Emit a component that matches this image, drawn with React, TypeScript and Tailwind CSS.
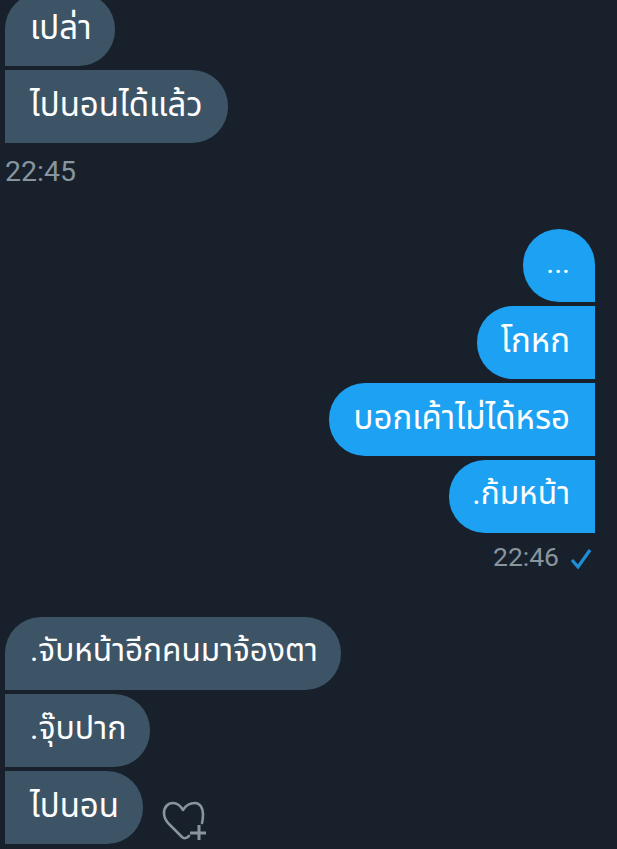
import React from "react";

const sans = "font-['Roboto','Noto_Sans','Noto_Sans_Thai','DejaVu_Sans',sans-serif]";

function Bubble({ text, mine, corners, width, size = "text-[33px]" }: { text: string; mine?: boolean; corners: string; width: string; size?: string }) {
  return (
    <div
      className={`h-[73px] flex items-center pb-[5px] leading-none text-white whitespace-nowrap ${size} ${corners} ${width} ${
        mine ? "bg-[#1da1f2] justify-end pr-[25px]" : "bg-[#3d5466] pl-[25px]"
      }`}
    >
      {text}
    </div>
  );
}

function HeartPlus() {
  return (
    <svg width="44" height="42" viewBox="0 0 44 42" fill="none" className="mb-[3px] ml-[19px] text-[#88959f]">
      <path
        d="M27 37 C25 39 22 40 20 38 L7 25 C3 21 2 17 2 14 C2 8 6 4 11 4 C15 4 18 6 21 11 C24 6 28 4 33 4 C38 4 41 9 41 15 C41 18 41 21 40 24"
        stroke="currentColor"
        strokeWidth="2.6"
        strokeLinecap="round"
        strokeLinejoin="round"
      />
      <path d="M37 26 V41 M28 34 H44" stroke="currentColor" strokeWidth="3" />
    </svg>
  );
}

export default function App() {
  return (
    <div className={`h-[849px] overflow-hidden bg-[#18212b] ${sans}`}>
      <div className="-mt-[7px] flex flex-col pl-[5px] pr-[22px]">
        {/* Incoming, first group */}
        <div className="flex flex-col items-start gap-1">
          <Bubble text="เปล่า" corners="rounded-tl-[36px] rounded-r-[36px]" width="w-[110px]" />
          <Bubble text="ไปนอนได้แล้ว" corners="rounded-r-[36px]" width="w-[223px]" />
        </div>
        <div className="mt-[14px] text-[28.5px] leading-[30px] text-[#88959f]">22:45</div>

        {/* Outgoing */}
        <div className="mt-[42px] flex flex-col items-end gap-1">
          <Bubble text="..." mine size="text-[30px]" corners="rounded-tr-[36px] rounded-l-[36px]" width="w-[72px]" />
          <Bubble text="โกหก" mine corners="rounded-l-[36px]" width="w-[118px]" />
          <Bubble text="บอกเค้าไม่ได้หรอ" mine corners="rounded-l-[36px]" width="w-[266px]" />
          <Bubble text=".ก้มหน้า" mine size="text-[31.7px]" corners="rounded-l-[36px]" width="w-[146px]" />
        </div>
        <div className="mt-[9px] flex items-center justify-end gap-[12px] text-[26.5px] leading-[30px] text-[#88959f]">
          <span>22:46</span>
          <svg width="24" height="22" viewBox="0 0 24 22" fill="none" className="mt-[4px] text-[#1d8fd8]">
            <path d="M1 12 L7 19 L19 2" stroke="currentColor" strokeWidth="3.2" />
          </svg>
        </div>

        {/* Incoming, second group */}
        <div className="mt-[45px] flex flex-col items-start gap-1">
          <Bubble text=".จับหน้าอีกคนมาจ้องตา" size="text-[31.6px]" corners="rounded-tl-[36px] rounded-r-[36px]" width="w-[336px]" />
          <Bubble text=".จุ๊บปาก" size="text-[32px]" corners="rounded-r-[36px]" width="w-[145px]" />
          <div className="flex items-end">
            <Bubble text="ไปนอน" corners="rounded-r-[36px]" width="w-[138px]" />
            <HeartPlus />
          </div>
        </div>
      </div>
    </div>
  );
}
